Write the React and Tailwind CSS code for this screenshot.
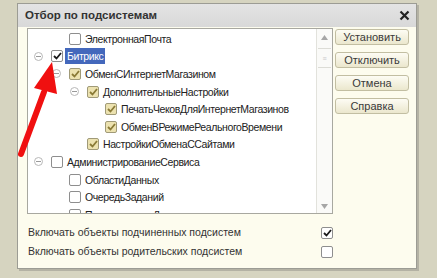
import React from "react";

const rows = [
  { label: "ЭлектроннаяПочта", level: 1, state: "off" },
  { label: "Битрикс", level: 0, state: "on", toggle: true, selected: true },
  { label: "ОбменСИнтернетМагазином", level: 1, state: "sub", toggle: true },
  { label: "ДополнительныеНастройки", level: 2, state: "sub", toggle: true },
  { label: "ПечатьЧековДляИнтернетМагазинов", level: 3, state: "sub" },
  { label: "ОбменВРежимеРеальногоВремени", level: 3, state: "sub" },
  { label: "НастройкиОбменаССайтами", level: 2, state: "sub" },
  { label: "АдминистрированиеСервиса", level: 0, state: "off", toggle: true },
  { label: "ОбластиДанных", level: 1, state: "off" },
  { label: "ОчередьЗаданий", level: 1, state: "off" },
  { label: "ПоставляемыеДанные", level: 1, state: "off" },
];

const indent = ["pl-[6px]", "pl-[24px]", "pl-[42px]", "pl-[60px]"];

function Check({ state }) {
  if (state === "sub") {
    return (
      <span className="flex h-[12px] w-[12px] items-center justify-center rounded-[2px] border border-[#a09a78] bg-[#ece2b0]">
        <svg width="9" height="8" viewBox="0 0 9 8">
          <path d="M1 4 L3.5 6.5 L8 1" fill="none" stroke="#8a7a36" strokeWidth="1.8" />
        </svg>
      </span>
    );
  }
  return (
    <span className="flex h-[12px] w-[12px] items-center justify-center rounded-[2px] border border-[#8e8e8e] bg-white">
      {state === "on" && (
        <svg width="9" height="8" viewBox="0 0 9 8">
          <path d="M1 4 L3.5 6.5 L8 1" fill="none" stroke="#1a1a1a" strokeWidth="1.8" />
        </svg>
      )}
    </span>
  );
}

function Toggle() {
  return (
    <span className="flex h-[9px] w-[9px] items-center justify-center rounded-full border border-[#b8b8b8] bg-white">
      <span className="h-px w-[5px] bg-[#9a9a9a]" />
    </span>
  );
}

function Button({ children }) {
  return (
    <button className="h-[16px] w-[74px] rounded-[3px] border border-[#c2bea2] bg-gradient-to-b from-[#fdfcf4] to-[#ebe7cd] text-[11px] leading-none text-[#3a3a3a]">
      {children}
    </button>
  );
}

export default function App() {
  return (
    <div
      className="relative h-[278px] w-[437px] overflow-hidden bg-[#d6d4c0] pl-[17px] pt-[3px]"
      style={{ fontFamily: '"Liberation Sans", Arial, sans-serif' }}
    >
      <div className="flex h-[266px] w-[400px] flex-col border border-[#9c9c94] bg-[#fdfcee] shadow-[2px_2px_0_#b4b2a4]">
        <div className="flex h-[23px] items-center justify-between bg-gradient-to-b from-[#e4e4e4] to-[#d8d8d8] pl-[7px] pr-[6px]">
          <span className="text-[11.5px] font-bold text-[#333]">Отбор по подсистемам</span>
          <svg width="11" height="11" viewBox="0 0 11 11">
            <path d="M1.5 1.5 L9.5 9.5 M9.5 1.5 L1.5 9.5" stroke="#222" strokeWidth="2.2" />
          </svg>
        </div>

        <div className="flex gap-[2px] pl-[9px] pt-px">
          <div className="flex h-[186px] w-[306px] border border-[#a8a8a0] bg-white">
            <div className="flex-1 overflow-hidden pt-px">
              {rows.map((r) => (
                <div
                  key={r.label}
                  className={`flex h-[17.6px] items-center ${indent[r.level]}`}
                >
                  <span className="flex w-[17px] justify-start">{r.toggle && <Toggle />}</span>
                  <Check state={r.state} />
                  <span
                    className={`ml-[2px] whitespace-nowrap px-[2px] text-[10.5px] leading-[16px] tracking-[-0.4px] ${
                      r.selected ? "bg-[#4468bc] text-white" : "text-[#222]"
                    }`}
                  >
                    {r.label}
                  </span>
                </div>
              ))}
            </div>
            <div className="flex w-[16px] flex-col border-l border-[#e2e2dc] bg-[#fafaf8]">
              <div className="flex h-[16px] items-center justify-center">
                <svg width="7" height="5" viewBox="0 0 7 5">
                  <path d="M3.5 0 L7 5 L0 5 Z" fill="#a6a6a6" />
                </svg>
              </div>
              <div className="mx-px mt-[3px] flex h-[20px] items-center justify-center border-y border-[#dcdcd6]">
                <span className="text-[7px] leading-none text-[#c8c8c8]">≡</span>
              </div>
              <div className="flex-1" />
              <div className="flex h-[14px] items-center justify-center">
                <svg width="7" height="5" viewBox="0 0 7 5">
                  <path d="M0 0 L7 0 L3.5 5 Z" fill="#a6a6a6" />
                </svg>
              </div>
            </div>
          </div>

          <div className="flex flex-col gap-[7px] pt-px">
            <Button>Установить</Button>
            <Button>Отключить</Button>
            <Button>Отмена</Button>
            <Button>Справка</Button>
          </div>
        </div>

        <div className="flex w-[315px] flex-col pl-[10px] pt-[9px]">
          <div className="flex h-[19px] items-center justify-between">
            <span className="text-[10.5px] text-[#333]">Включать объекты подчиненных подсистем</span>
            <Check state="on" />
          </div>
          <div className="flex h-[19px] items-center justify-between">
            <span className="text-[10.5px] text-[#333]">Включать объекты родительских подсистем</span>
            <Check state="off" />
          </div>
        </div>
      </div>

      <svg
        className="absolute left-0 top-0"
        width="437"
        height="278"
        viewBox="0 0 437 278"
        style={{ pointerEvents: "none" }}
      >
        <path d="M21 154 L44 92" stroke="#f01010" strokeWidth="6" strokeLinecap="round" />
        <path d="M52 62 L34 88 L57 94 Z" fill="#f01010" />
      </svg>
    </div>
  );
}
